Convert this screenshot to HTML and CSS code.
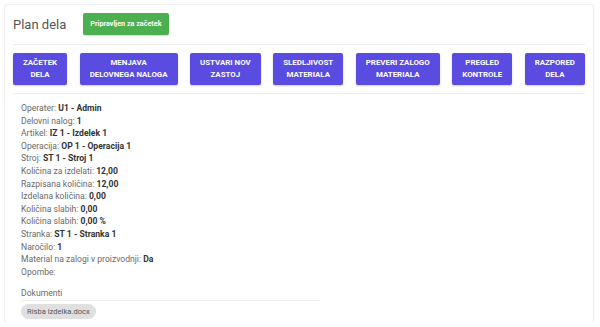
FILE: index.html
```html
<!DOCTYPE html>
<html>
<head>
<meta charset="utf-8">
<link rel="stylesheet" href="styles.css">
</head>
<body>
<div class="card">
  <div class="header">
    <h1 class="title">Plan dela</h1>
    <span class="badge">Pripravljen za začetek</span>
  </div>
  <hr class="sep sep-first">
  <div class="actions">
    <button class="btn">ZAČETEK<br>DELA</button>
    <button class="btn">MENJAVA<br>DELOVNEGA NALOGA</button>
    <button class="btn">USTVARI NOV<br>ZASTOJ</button>
    <button class="btn">SLEDLJIVOST<br>MATERIALA</button>
    <button class="btn">PREVERI ZALOGO<br>MATERIALA</button>
    <button class="btn">PREGLED<br>KONTROLE</button>
    <button class="btn">RAZPORED<br>DELA</button>
  </div>
  <hr class="sep">
  <div class="details">
    <div class="row">Operater: <b>U1 - Admin</b></div>
    <div class="row">Delovni nalog: <b>1</b></div>
    <div class="row">Artikel: <b>IZ 1 - Izdelek 1</b></div>
    <div class="row">Operacija: <b>OP 1 - Operacija 1</b></div>
    <div class="row">Stroj: <b>ST 1 - Stroj 1</b></div>
    <div class="row">Količina za izdelati: <b>12,00</b></div>
    <div class="row">Razpisana količina: <b>12,00</b></div>
    <div class="row">Izdelana količina: <b>0,00</b></div>
    <div class="row">Količina slabih: <b>0,00</b></div>
    <div class="row">Količina slabih: <b>0,00 %</b></div>
    <div class="row">Stranka: <b>ST 1 - Stranka 1</b></div>
    <div class="row">Naročilo: <b>1</b></div>
    <div class="row">Material na zalogi v proizvodnji: <b>Da</b></div>
    <div class="row">Opombe:</div>
    <div class="docs">
      <div class="docs-title">Dokumenti</div>
      <span class="chip">Risba izdelka.docx</span>
    </div>
  </div>
</div>
</body>
</html>
```
FILE: styles.css
```css
html, body {
  margin: 0;
  padding: 0;
  background: #ffffff;
  font-family: Roboto, "Liberation Sans", sans-serif;
}
.card {
  margin: 4px 6px 0 4px;
  border: 1px solid #f0f0f0;
  border-bottom: none;
  border-radius: 4px;
  padding: 8px 8px 4px 8px;
  box-shadow: 0 0 2px rgba(0,0,0,0.04);
}
.header {
  display: flex;
  align-items: center;
  gap: 17px;
  height: 22px;
}
.title {
  margin: 0;
  font-size: 13px;
  font-weight: 400;
  color: #555;
}
.badge {
  background: #4caf50;
  color: #fff;
  font-size: 7.2px;
  font-weight: 700;
  height: 22px;
  line-height: 22px;
  padding: 0 7px;
  border-radius: 2px;
  box-shadow: 0 1px 1px rgba(0,0,0,0.15);
}
.sep {
  border: none;
  border-top: 1px solid #eeeeee;
  margin: 8px 0;
}
.sep-first {
  margin-top: 9px;
}
.actions {
  display: flex;
  justify-content: space-between;
}
.btn {
  background: #5a4be1;
  color: #fff;
  border: none;
  border-radius: 2px;
  font-family: Roboto, "Liberation Sans", sans-serif;
  font-size: 7.9px;
  font-weight: 700;
  line-height: 12px;
  height: 32px;
  padding: 4px 10px;
  text-align: center;
  box-shadow: 0 1px 2px rgba(0,0,0,0.2);
}
.details {
  padding: 0 8px;
  font-size: 8.6px;
  color: #6a6a6a;
  line-height: 12.6px;
}
.details b {
  color: #333;
  font-weight: 700;
}
.docs {
  margin-top: 9px;
}
.docs-title {
  width: 299px;
  border-bottom: 1px solid #eeeeee;
}
.chip {
  display: inline-block;
  margin-top: 3px;
  height: 15px;
  line-height: 15px;
  padding: 0 6px;
  background: #e0e0e0;
  border-radius: 8px;
  font-size: 7.6px;
  color: #555;
}
```
